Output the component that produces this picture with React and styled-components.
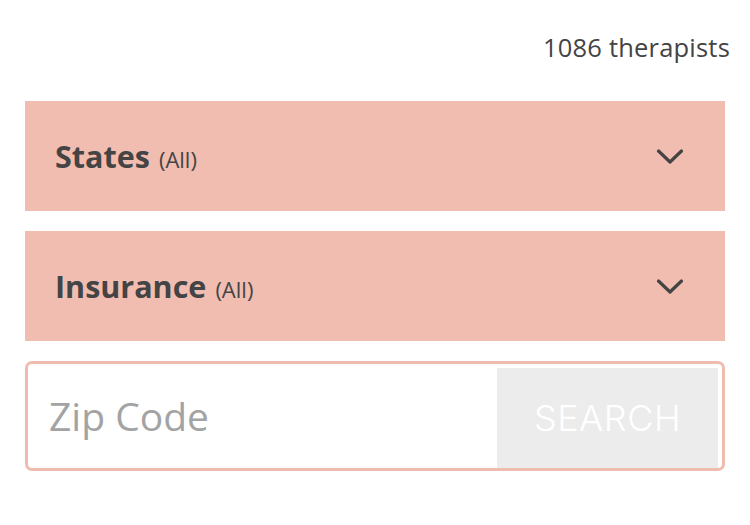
import styled, { createGlobalStyle } from "styled-components";

const GlobalStyle = createGlobalStyle`
  body {
    margin: 0;
    background: #ffffff;
    font-family: "Open Sans", "Noto Sans", sans-serif;
  }
`;

const filters = [
  { id: "states", label: "States", value: "(All)" },
  { id: "insurance", label: "Insurance", value: "(All)" },
];

const Chevron = () => (
  <svg width="28" height="20" viewBox="0 0 28 20" fill="none">
    <path
      d="M2.5 5 L14 16 L25.5 5"
      stroke="#444444"
      strokeWidth="3.2"
      strokeLinecap="round"
      strokeLinejoin="round"
    />
  </svg>
);

const App = () => {
  return (
    <>
      <GlobalStyle />
      <Page>
        <Count>1086 therapists</Count>
        {filters.map((filter) => (
          <FilterBar key={filter.id}>
            <FilterLabel>
              <strong>{filter.label}</strong>
              <small>{filter.value}</small>
            </FilterLabel>
            <Chevron />
          </FilterBar>
        ))}
        <SearchBox>
          <ZipInput placeholder="Zip Code" />
          <SearchButton>SEARCH</SearchButton>
        </SearchBox>
      </Page>
    </>
  );
};

export default App;

const Page = styled.div`
  display: flex;
  flex-direction: column;
  gap: 20px;
  width: 700px;
  padding: 32px 25px 0;
`;

const Count = styled.div`
  align-self: flex-end;
  margin-right: -5px;
  margin-bottom: 19px;
  font-size: 25.5px;
  line-height: 30px;
  letter-spacing: 0.2px;
  color: #444444;
`;

const FilterBar = styled.div`
  display: flex;
  align-items: center;
  justify-content: space-between;
  height: 110px;
  padding: 0 41px 0 30px;
  box-sizing: border-box;
  background-color: #f2bdb1;
`;

const FilterLabel = styled.div`
  display: flex;
  align-items: baseline;
  gap: 9px;
  color: #444444;

  strong {
    font-size: 30.5px;
    font-weight: 700;
  }

  small {
    font-size: 22px;
  }
`;

const SearchBox = styled.div`
  display: flex;
  height: 110px;
  box-sizing: border-box;
  border: 3px solid #efbcb0;
  border-radius: 7px;
  padding: 4px 4px 0 0;
  overflow: hidden;
`;

const ZipInput = styled.input`
  flex: 1 1 0;
  min-width: 0;
  border: none;
  outline: none;
  background: none;
  padding: 0 0 5px 21px;
  font-family: "Open Sans", "Noto Sans", sans-serif;
  font-size: 39px;
  color: #444444;

  &::placeholder {
    color: #a3a3a3;
  }
`;

const SearchButton = styled.button`
  width: 221px;
  border: none;
  background-color: #ececec;
  font-family: "Inter", "Liberation Sans", sans-serif;
  font-size: 36px;
  font-weight: 300;
  letter-spacing: 0.5px;
  color: #ffffff;
`;
